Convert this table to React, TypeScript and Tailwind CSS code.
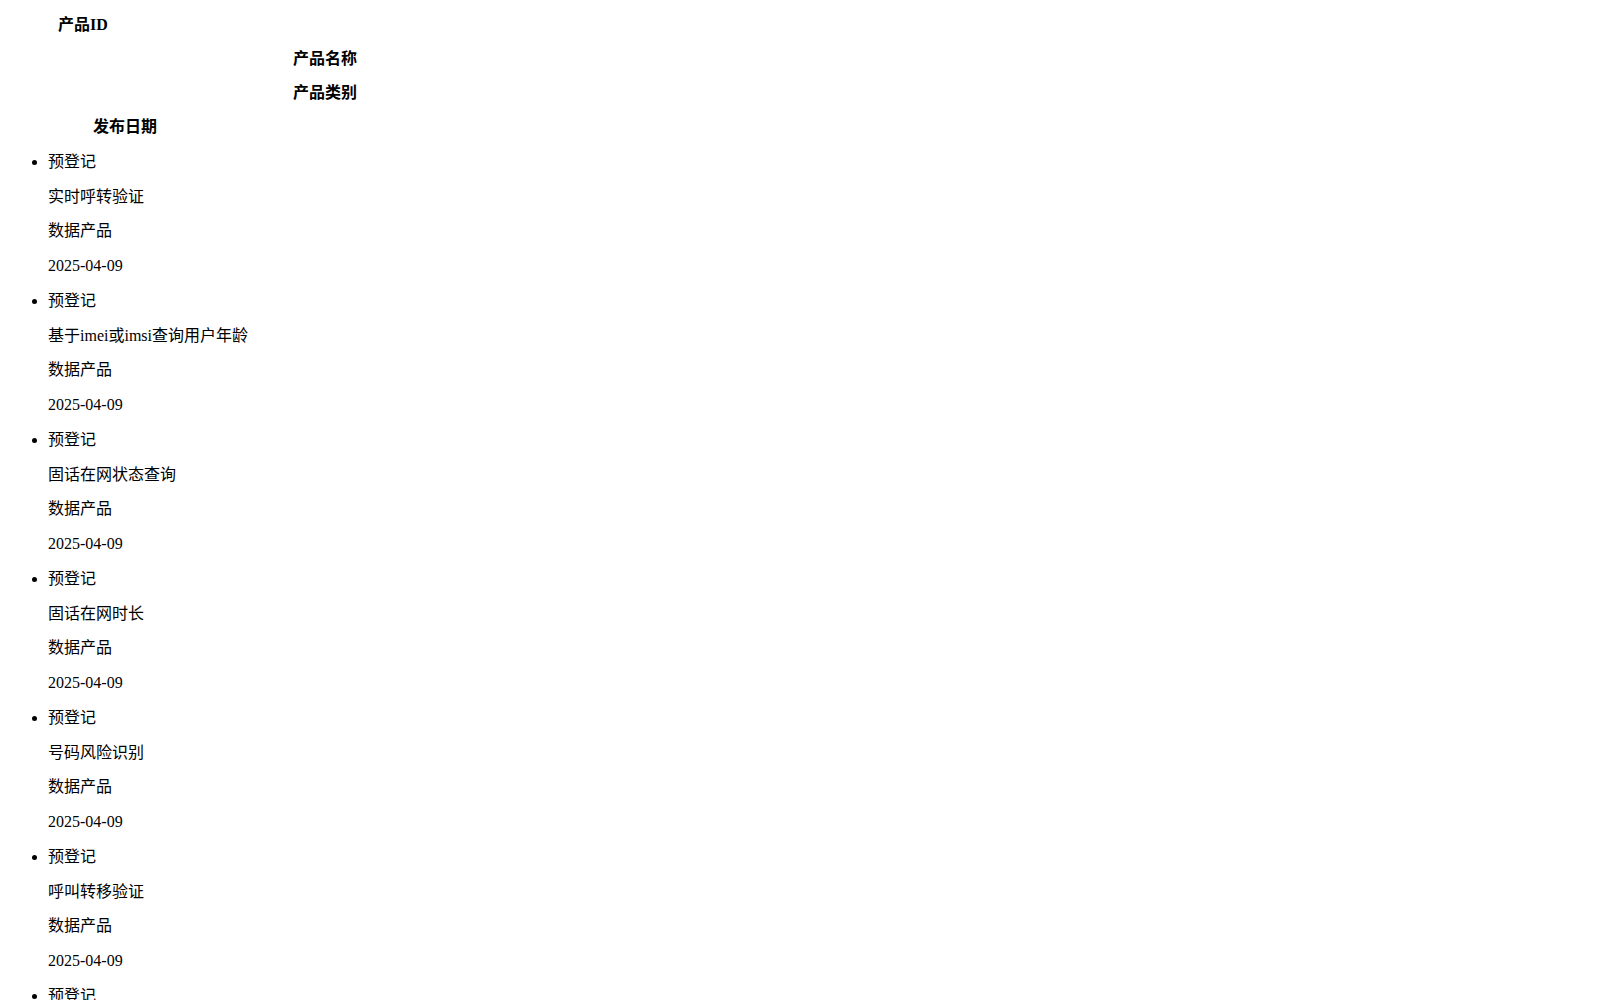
const headers = [
	{ label: "产品ID", indent: "pl-[50px]" },
	{ label: "产品名称", indent: "pl-[285px]" },
	{ label: "产品类别", indent: "pl-[285px]" },
	{ label: "发布日期", indent: "pl-[85px]" },
];

const products = [
	"实时呼转验证",
	"基于imei或imsi查询用户年龄",
	"固话在网状态查询",
	"固话在网时长",
	"号码风险识别",
	"呼叫转移验证",
	"手机号在网状态",
	"手机号在网时长",
	"三要素核验",
	"二要素核验",
	"携号转网查询",
	"号码归属地查询",
	"空号检测",
	"实名认证",
	"用户消费等级",
	"终端型号查询",
	"停机状态查询",
	"反欺诈评分",
	"设备指纹识别",
	"位置区域核验",
	"月均话费查询",
	"入网时间查询",
	"证件号码一致性验证",
	"号码状态实时查询",
];

export default function App() {
	return (
		<div
			className="bg-white px-2 pb-2 text-[16px] text-black"
			style={{ fontFamily: '"Liberation Serif", "Noto Sans CJK SC", serif' }}
		>
			<div className="pt-[8px]">
				{headers.map((h) => (
					<div key={h.label} className={`h-[33.9px] leading-[33.9px] font-bold ${h.indent}`}>
						{h.label}
					</div>
				))}
			</div>
			<ul className="mt-[1.2px] list-disc pl-10">
				{products.map((name, i) => (
					<li key={i} className="leading-[34.75px]">
						<div>预登记</div>
						<div>{name}</div>
						<div>数据产品</div>
						<div>2025-04-09</div>
					</li>
				))}
			</ul>
		</div>
	);
}
